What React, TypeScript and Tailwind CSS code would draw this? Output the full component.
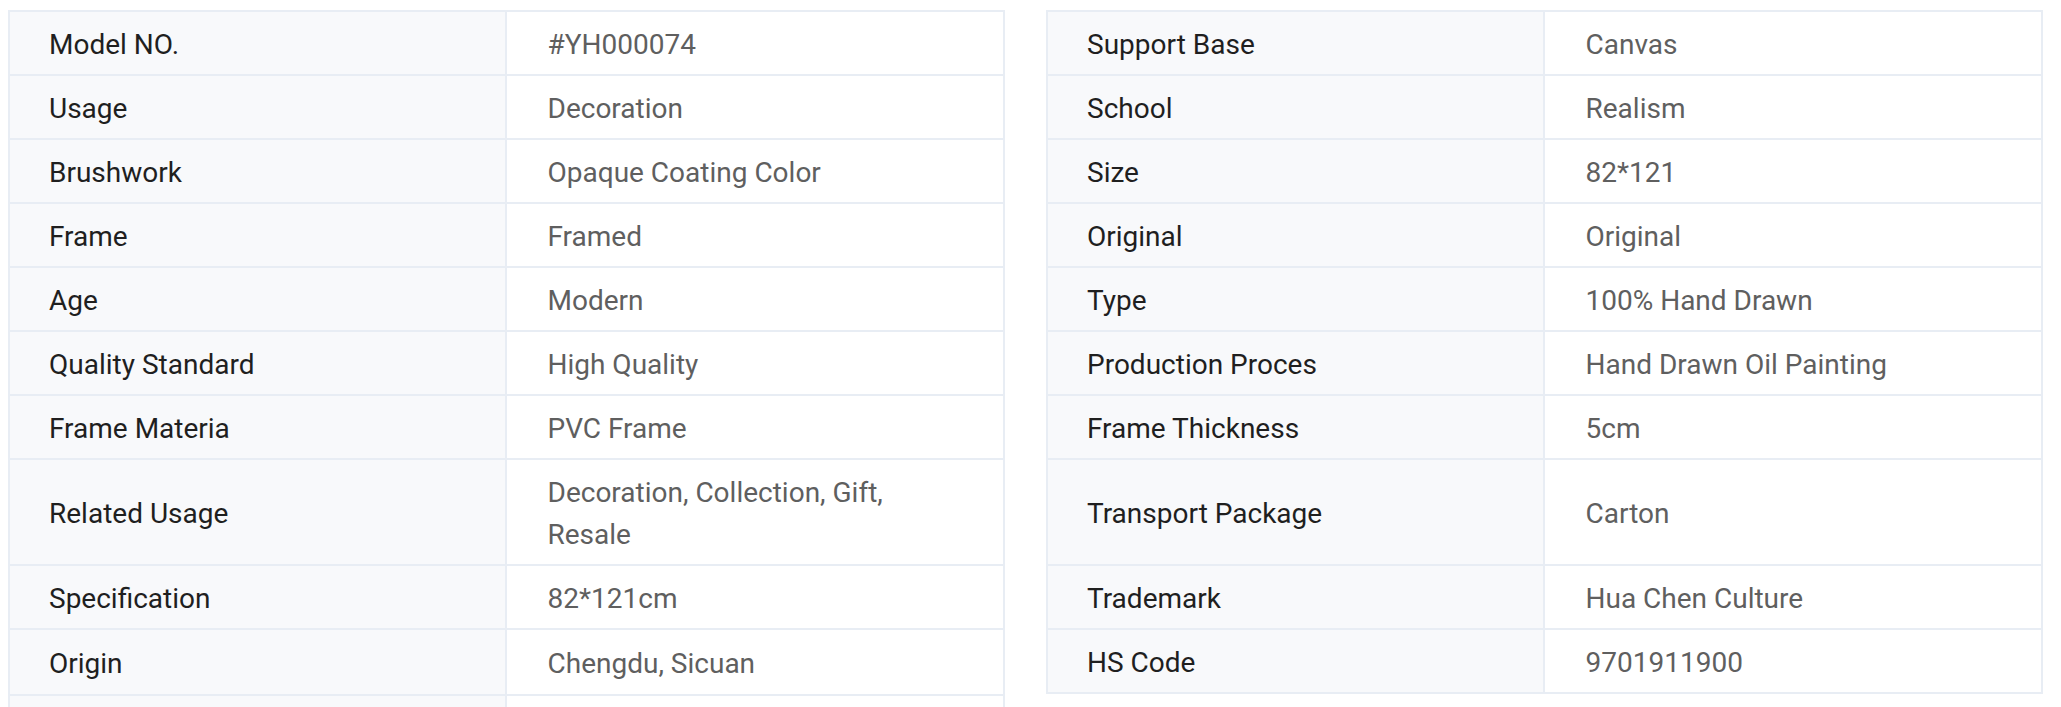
const left: [string, string][] = [
  ['Model NO.', '#YH000074'],
  ['Usage', 'Decoration'],
  ['Brushwork', 'Opaque Coating Color'],
  ['Frame', 'Framed'],
  ['Age', 'Modern'],
  ['Quality Standard', 'High Quality'],
  ['Frame Materia', 'PVC Frame'],
  ['Related Usage', 'Decoration, Collection, Gift, Resale'],
  ['Specification', '82*121cm'],
  ['Origin', 'Chengdu, Sicuan'],
  ['', ''],
]

const right: [string, string][] = [
  ['Support Base', 'Canvas'],
  ['School', 'Realism'],
  ['Size', '82*121'],
  ['Original', 'Original'],
  ['Type', '100% Hand Drawn'],
  ['Production Proces', 'Hand Drawn Oil Painting'],
  ['Frame Thickness', '5cm'],
  ['Transport Package', 'Carton'],
  ['Trademark', 'Hua Chen Culture'],
  ['HS Code', '9701911900'],
]

function Pair({ item, last }: { item?: [string, string]; last: boolean }) {
  if (!item) return <div className="w-[997px]" />
  return (
    <div
      className={`grid w-[997px] grid-cols-2 border-x-2 border-t-2 border-[#e8edf4] ${
        last ? 'border-b-2' : ''
      }`}
    >
      <div className="flex items-center border-r-2 border-[#e8edf4] bg-[#f8f9fb] pb-[8px] pl-[39px] pr-6 pt-[12px] text-[#1f1f1f]">
        {item[0]}
      </div>
      <div className="flex items-center pb-[8px] pl-[41px] pr-[110px] pt-[12px] text-[#5f5f5f]">
        {item[1]}
      </div>
    </div>
  )
}

export default function App() {
  return (
    <div
      className="min-h-screen bg-white pl-2 pt-[10px] text-[28px] leading-[42px]"
      style={{ fontFamily: 'Roboto, "Liberation Sans", sans-serif' }}
    >
      <div className="flex flex-col">
        {left.map((l, i) => (
          <div key={i} className="flex gap-[41px]">
            <Pair item={l} last={false} />
            <Pair item={right[i]} last={i === right.length - 1} />
          </div>
        ))}
      </div>
    </div>
  )
}
